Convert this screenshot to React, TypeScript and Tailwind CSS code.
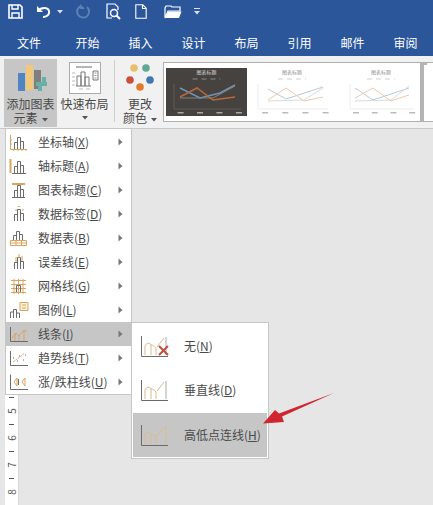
import React from "react";

const O = "#d9a45f";
const G = "#6b6b6b";

const Bars = () => (
  <path d="M5.500 16V9.500h3V16M8.500 16V4.500h3V16M11.500 16V8.500h3V16" fill="none" stroke={G} strokeWidth="1" />
);

const menuIcons: Record<string, React.ReactNode> = {
  axis: (
    <>
      <Bars />
      <path d="M1.500 2v14.500H18M1 7h2M1 11h2M5 18v-1M9 18v-1M13 18v-1M17 18v-1" stroke={O} fill="none" />
    </>
  ),
  title: (
    <>
      <Bars />
      <path d="M1.500 2v14" stroke={O} strokeWidth="2" fill="none" />
      <path d="M3 16.500h14" stroke={G} fill="none" />
    </>
  ),
  chart: (
    <>
      <Bars />
      <path d="M3 3h13" stroke={O} strokeWidth="2" fill="none" />
      <path d="M3 16.500h13" stroke={G} fill="none" />
    </>
  ),
  label: (
    <>
      <Bars />
      <path d="M6 5h2M9 1.500h2M13 5h2" stroke={O} fill="none" />
    </>
  ),
  table: (
    <>
      <path d="M4.500 11V6.500h3V11M7.500 11V2.500h3V11M10.500 11V5.500h3V11" fill="none" stroke={G} />
      <path d="M1.500 11.500h16v5h-16zM7 11.500v5M12.500 11.500v5M1.500 14h16" stroke={O} fill="none" />
    </>
  ),
  error: (
    <>
      <Bars />
      <path d="M7 4v5M10 1v4M13 3v5" stroke={O} fill="none" />
    </>
  ),
  grid: (
    <>
      <path d="M2 3.500h15M2 7.500h15M2 11.500h15M2 15.500h15M5 2v15M9.500 2v15M14 2v15" stroke={O} fill="none" />
      <path d="M7.500 15V8.500h4V15" stroke={G} fill="none" />
    </>
  ),
  legend: (
    <>
      <path d="M1.500 17v-6h3v6M4.500 17V8.500h3V17M7.500 17v-5h3v5" stroke={G} fill="none" />
      <path d="M11 1.500h8v8h-8z" fill="#fdf3d9" stroke={O} />
      <path d="M13 4h4M13 7h4" stroke={O} fill="none" />
    </>
  ),
  lines: (
    <>
      <path d="M1.500 2v14.500H19" stroke={G} fill="none" />
      <path d="M3 13l4-5 3 3 5-6 3 2" stroke={O} fill="none" />
      <path d="M6 8v8M10 11v5M15 5v11" stroke={O} fill="none" />
    </>
  ),
  trend: (
    <>
      <path d="M1.500 2v14.500H19" stroke={G} fill="none" />
      <path d="M4 13l12-9" stroke={O} strokeDasharray="2 1" fill="none" />
      <path d="M4 9h1M8 12h1M10 7h1M14 11h1M16 6h1" stroke={G} fill="none" />
    </>
  ),
  updown: (
    <>
      <path d="M1.500 1.500v15H19" stroke={G} fill="none" />
      <path d="M5 9l3-4v8zM16 5l-3 4 3 4z" stroke={O} fill="none" />
      <path d="M9.500 6v6" stroke={G} fill="none" />
    </>
  ),
};

const items: [string, string, string][] = [
  ["axis", "坐标轴", "X"],
  ["title", "轴标题", "A"],
  ["chart", "图表标题", "C"],
  ["label", "数据标签", "D"],
  ["table", "数据表", "B"],
  ["error", "误差线", "E"],
  ["grid", "网格线", "G"],
  ["legend", "图例", "L"],
  ["lines", "线条", "I"],
  ["trend", "趋势线", "T"],
  ["updown", "涨/跌柱线", "U"],
];

const LineIcon = ({ kind }: { kind: "none" | "drop" | "hilo" }) => (
  <svg width="30" height="24" viewBox="0 0 30 24" fill="none" className="shrink-0">
    <path d="M0.500 2v20.500H27" stroke={G} />
    <path d="M4 21V12c1-3 5-4 6-1v10M10 11c2 0 3 1 5 3v7M16 13l7-9" stroke="#dcb98e" />
    <path d="M25 21V3" stroke={kind === "hilo" ? "#dcb98e" : "#a9a9a9"} />
    {kind === "none" && <path d="M18 12l9 9M27 12l-9 9" stroke="#c0503f" strokeWidth="2" />}
  </svg>
);

const Chevron = () => (
  <svg width="5" height="8" viewBox="0 0 5 8" className="shrink-0">
    <path d="M0.500 0.500L4.500 4 0.500 7.500z" fill="#777" />
  </svg>
);

const Caret = () => (
  <svg width="6" height="4" viewBox="0 0 6 4" className="inline-block ml-1 align-middle">
    <path d="M0 0h6L3 3.500z" fill="#555" />
  </svg>
);

const Thumb = ({
  dark,
  width,
  a,
  b,
  c,
}: {
  dark?: boolean;
  width: number;
  a: string;
  b: string;
  c: string;
}) => (
  <svg width={width} height="48" viewBox={`0 0 ${width} 48`} className="shrink-0">
    <rect width={width} height="48" fill={dark ? "#45423f" : "#ffffff"} />
    <text
      x={width / 2}
      y="6"
      textAnchor="middle"
      fontSize="5"
      fill={dark ? "#d8d8d8" : "#8f8f8f"}
      fontFamily='"Noto Sans CJK SC", sans-serif'
    >
      图表标题
    </text>
    <path d={`M${width / 2 - 14} 11h28`} stroke={dark ? "#8a8a8a" : "#cfcfcf"} strokeWidth="1" strokeDasharray="5 4" />
    <path d={`M8 16v25h${width - 14}`} stroke={dark ? "#5f5d5b" : "#ececec"} fill="none" />
    <path d={a} stroke={dark ? "#6f94b4" : "#b9c9d8"} strokeWidth={dark ? 1.500 : 1} fill="none" />
    <path d={b} stroke={dark ? "#b8683c" : "#eccaa9"} strokeWidth={dark ? 1.500 : 1} fill="none" />
    <path d={c} stroke={dark ? "#84827f" : "#dadada"} fill="none" />
    {[0.18, 0.42, 0.66, 0.9].map((p) => (
      <rect key={p} x={width * p - 3} y="44" width="6" height="1.500" fill={dark ? "#aaa" : "#bbb"} />
    ))}
  </svg>
);

export default function App() {
  return (
    <div
      className="relative w-[433px] h-[505px] overflow-hidden bg-[#e6e6e6] text-xs leading-4 text-[#4a4a4a]"
      style={{ fontFamily: '"Noto Sans CJK SC", "Liberation Sans", sans-serif' }}
    >
      {/* Title bar */}
      <div className="h-[56px] bg-[#2b579a] flex flex-col">
        <div className="flex items-center h-[23px] pl-[8px] shrink-0">
          <svg width="15" height="15" viewBox="0 0 15 15" fill="none" className="shrink-0">
            <path d="M1 1h11l2 2v11H1z" stroke="#fff" strokeWidth="1.600" />
            <path d="M4 1v4h6V1M4 14V9h7v5" stroke="#fff" strokeWidth="1.400" />
          </svg>
          <svg width="17" height="15" viewBox="0 0 17 15" fill="none" className="shrink-0 ml-[13px]">
            <path d="M2 7c3-4 10-4 11 0s-3 6-6 6" stroke="#fff" strokeWidth="2" />
            <path d="M1 2v6h6z" fill="#fff" />
          </svg>
          <svg width="6" height="4" viewBox="0 0 6 4" className="ml-[4px] shrink-0">
            <path d="M0 0h6L3 3.500z" fill="#d7e1ef" />
          </svg>
          <svg width="15" height="15" viewBox="0 0 15 15" fill="none" className="ml-[13px] shrink-0">
            <path d="M11 3a6 6 0 1 1-6-1" stroke="#5c7fb5" strokeWidth="2" />
            <path d="M4 0v5h5z" fill="#5c7fb5" />
          </svg>
          <svg width="16" height="17" viewBox="0 0 16 17" fill="none" className="ml-[15px] shrink-0">
            <path d="M6 15H1V1h8l3 3v3" stroke="#fff" strokeWidth="1.200" />
            <circle cx="8" cy="10" r="3.500" stroke="#fff" strokeWidth="1.500" />
            <path d="M10.500 12.500L14 16" stroke="#fff" strokeWidth="2" />
          </svg>
          <svg width="12" height="15" viewBox="0 0 12 15" fill="none" className="ml-[13px] shrink-0">
            <path d="M0.800 0.800h7l3.400 3.400v10H0.800zM7.500 1v3.500h4" stroke="#fff" strokeWidth="1.100" />
          </svg>
          <svg width="18" height="14" viewBox="0 0 18 14" className="ml-[17px] shrink-0">
            <path d="M1 3V13L4 6h12V2H8L7 1H2z" fill="none" stroke="#fff" strokeWidth="1.200" />
            <path d="M4 6.500h13.500L15 13H1.500z" fill="#fff" />
          </svg>
          <svg width="6" height="7" viewBox="0 0 6 7" className="ml-[12px] shrink-0">
            <path d="M0 0h6v1H0zM0 3h6L3 6.500z" fill="#d7e1ef" />
          </svg>
        </div>
        <div className="flex grow items-center text-white pl-[2px] pt-[7px]">
          {["文件", "开始", "插入", "设计", "布局", "引用", "邮件", "审阅"].map((t, i) => (
            <span key={t} className={`text-center shrink-0 ${i === 0 ? "w-[54px] mr-[5px]" : "w-[53px]"}`}>
              {t}
            </span>
          ))}
        </div>
      </div>

      {/* Ribbon */}
      <div className="h-[73px] bg-[#f1f1f1] border-b border-[#c9c9c9] flex pt-[3px] pl-[4px]">
        <div className="w-[53px] h-[68px] bg-[#c6c6c6] flex flex-col items-center shrink-0">
          <svg width="30" height="36" viewBox="0 0 30 36" className="ml-[2px] shrink-0">
            <rect x="1" y="14" width="7" height="18" fill="#4f86c0" />
            <rect x="9" y="6" width="7" height="25" fill="#f0c877" />
            <rect x="17" y="11" width="7" height="19" fill="#7f7f7f" />
            <path d="M19 23h6v-5h4v5h1v4h-5v5h-4v-5h-2z" fill="#66b0a4" />
          </svg>
          <span className="whitespace-nowrap leading-[14px] mt-[2px]">添加图表</span>
          <span className="leading-[14px]">
            元素
            <Caret />
          </span>
        </div>
        <div className="w-[53px] ml-[1px] flex flex-col items-center shrink-0">
          <div className="w-[32px] h-[32px] mt-[3px] bg-white border border-[#ababab] shrink-0 flex items-center justify-center">
            <svg width="28" height="26" viewBox="0 0 28 26" fill="none">
              <path d="M5 2h16" stroke="#b5b5b5" strokeWidth="2" />
              <path d="M1 8h3M1 12h3M1 16h3M1 20h3" stroke="#bbb" />
              <path d="M6 21V11h4v10M10 21V7h4v14M14 21V12h4v9M5 21h15" stroke="#777" />
              <path d="M22 6h5v9h-5z" stroke="#777" />
              <path d="M23.500 8h2M23.500 10.500h2M23.500 13h2" stroke="#999" />
              <path d="M8 24h4M15 24h4" stroke="#bbb" />
            </svg>
          </div>
          <span className="whitespace-nowrap leading-[16px] mt-[2px]">快速布局</span>
          <svg width="6" height="4" viewBox="0 0 6 4" className="mt-[4px] shrink-0">
            <path d="M0 0h6L3 3.500z" fill="#555" />
          </svg>
        </div>
        <div className="w-px h-[62px] bg-[#d0d0d0] ml-[3px] mt-[1px] shrink-0" />
        <div className="w-[42px] ml-[4px] flex flex-col items-center shrink-0">
          <svg width="30" height="30" viewBox="0 0 30 30" className="mt-[3px] shrink-0">
            <circle cx="9" cy="6" r="3.800" fill="#e8bf6c" />
            <circle cx="21" cy="6" r="3.800" fill="#5fa893" />
            <circle cx="5" cy="18" r="3.800" fill="#c9503a" />
            <circle cx="25" cy="18" r="3.800" fill="#3f77b5" />
            <circle cx="15" cy="25" r="3.800" fill="#e07b2e" />
          </svg>
          <span className="leading-[14px] mt-[5px]">更改</span>
          <span className="leading-[14px] whitespace-nowrap">
            颜色
            <Caret />
          </span>
        </div>
        <div className="flex h-[60px] mt-[3px] ml-[2px] bg-white border-y border-l border-[#b0b0b0] pl-[2px] pt-[5px] grow overflow-hidden">
          <Thumb
            dark
            width={81}
            a="M14 20L34 30L54 25L69 17"
            b="M14 29L31 20L47 32L69 29"
            c="M14 30L47 30L69 18"
          />
          <div className="w-[3px] shrink-0" />
          <Thumb
            width={84}
            a="M18 21L36 31L73 19"
            b="M18 32L36 20L54 33L73 29"
            c="M18 33L54 32L73 20"
          />
          <div className="w-[8px] shrink-0" />
          <Thumb
            width={78}
            a="M13 20L31 32L67 20"
            b="M13 30L31 20L49 33L67 27"
            c="M13 33L49 32L67 18"
          />
          <div className="w-[7px] h-[60px] -mt-[5px] bg-[#b5b5b5] shrink-0 pl-[4px]">
            <div className="w-full h-full bg-white my-[2px]" />
          </div>
        </div>
      </div>

      {/* Ruler behind menus */}
      <div className="absolute left-[5px] top-[129px] bottom-0 w-[14px] bg-white border-r border-[#d8d8d8] flex flex-col justify-end items-center text-[10px] text-[#555]">
        {["5", "6", "7", "8"].map((n) => (
          <div key={n} className="h-[27px] w-full flex flex-col items-center shrink-0">
            <span className="w-[5px] h-px bg-[#555] shrink-0" />
            <span className="-rotate-90 leading-[10px] mt-[8px]">{n}</span>
          </div>
        ))}
      </div>

      {/* Main menu */}
      <div className="absolute left-[5px] top-[128px] w-[127px] h-[267px] bg-white border border-[#c6c6c6] pt-px">
        {items.map(([icon, label, key]) => (
          <div
            key={key}
            className={`h-[24px] flex items-center pl-[3px] pr-[8px] ${key === "I" ? "bg-[#c6c6c6]" : ""}`}
          >
            <svg width="20" height="19" viewBox="0 0 20 19" className="shrink-0">
              {menuIcons[icon]}
            </svg>
            <span className="ml-[9px] whitespace-nowrap grow">
              {label}(<u>{key}</u>)
            </span>
            <Chevron />
          </div>
        ))}
      </div>

      {/* Submenu */}
      <div className="absolute left-[131px] top-[322px] w-[138px] h-[137px] bg-white border border-[#c6c6c6] p-px flex flex-col">
        {(
          [
            ["none", "无", "N"],
            ["drop", "垂直线", "D"],
            ["hilo", "高低点连线", "H"],
          ] as const
        ).map(([kind, label, key]) => (
          <div
            key={key}
            className={`flex-1 flex items-center pl-[8px] ${key === "H" ? "bg-[#c6c6c6]" : ""}`}
          >
            <LineIcon kind={kind} />
            <span className="ml-[13px] whitespace-nowrap">
              {label}(<u>{key}</u>)
            </span>
          </div>
        ))}
      </div>

      {/* Annotation arrow */}
      <svg width="80" height="40" viewBox="0 0 80 40" className="absolute left-[259px] top-[390px]">
        <path d="M75 3L23 26.500 25 32 4 33.500 16 20 20 23.500z" fill="#cf2630" />
      </svg>
    </div>
  );
}
